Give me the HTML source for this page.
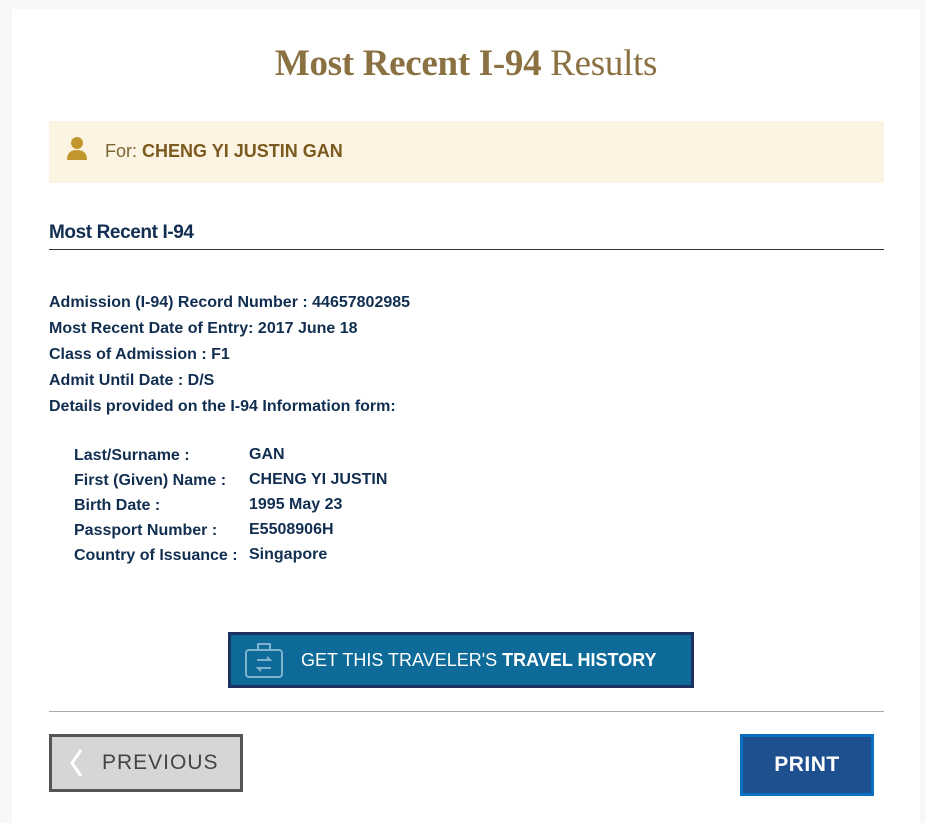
<!DOCTYPE html>
<html><head><style>
body{margin:0;width:925px;height:823px;background:#f7f7f7;position:relative;overflow:hidden;font-family:"Liberation Sans",Arial,sans-serif}
.panel{position:absolute;left:12px;top:9px;width:908px;height:814px;background:#fff}
.a{position:absolute;white-space:nowrap}
.t{font-family:"Liberation Serif",serif;color:#8b7142;font-size:37px;left:0;width:932px;text-align:center;top:42px;letter-spacing:-0.3px}
.for{left:49px;top:121px;width:835px;height:62px;background:#fdf3e3}
.nv{color:#112e51;font-weight:bold;font-size:16px}
.hr{position:absolute;left:49px;width:835px}
</style></head><body>
<div class="panel"></div>
<div class="a t"><b>Most Recent I-94</b> Results</div>
<div class="a for"></div>
<svg class="a" style="left:66px;top:137px" width="22" height="24" viewBox="0 0 22 24"><circle cx="11" cy="6" r="6" fill="#c1962c"/><path d="M1 23 Q1 13 11 13 Q21 13 21 23 Z" fill="#c1962c"/></svg>
<div class="a" style="left:105px;top:141px;font-size:18px;color:#7a6532">For: <b style="color:#7a5a1e">CHENG YI JUSTIN GAN</b></div>
<div class="a nv" style="left:49px;top:222px;font-size:19px;letter-spacing:-0.4px">Most Recent I-94</div>
<div class="hr" style="top:249px;height:1px;background:#333"></div>
<div class="a nv" style="left:49px;top:290px;line-height:26px">Admission (I-94) Record Number : 44657802985<br>Most Recent Date of Entry: 2017 June 18<br>Class of Admission : F1<br>Admit Until Date : D/S<br>Details provided on the I-94 Information form:</div>
<div class="a nv" style="left:74px;top:443px;line-height:25px">Last/Surname :<br>First (Given) Name :<br>Birth Date :<br>Passport Number :<br>Country of Issuance :</div>
<div class="a nv" style="left:249px;top:442px;line-height:25px">GAN<br>CHENG YI JUSTIN<br>1995 May 23<br>E5508906H<br>Singapore</div>
<div class="a" style="left:228px;top:632px;width:460px;height:50px;background:#0e6a99;border:3px solid #1c3361"></div>
<svg class="a" style="left:244px;top:641px" width="40" height="38" viewBox="0 0 40 38" fill="none" stroke="#7fb2cf" stroke-width="2"><rect x="2" y="9" width="36" height="27" rx="3"/><path d="M14 9V3h12v6M13 19h13l-3-3M27 27H14l3 3"/></svg>
<div class="a" style="left:301px;top:650px;font-size:18px;color:#fff">GET THIS TRAVELER'S <b>TRAVEL HISTORY</b></div>
<div class="hr" style="top:711px;height:1px;background:#aaa"></div>
<div class="a" style="left:49px;top:734px;width:188px;height:52px;background:#d6d6d6;border:3px solid #555"></div>
<svg class="a" style="left:68px;top:748px" width="16" height="30" viewBox="0 0 16 30"><path d="M13 2L4 15l9 13" fill="none" stroke="#fff" stroke-width="3"/></svg>
<div class="a" style="left:102px;top:751px;font-size:21px;color:#444;letter-spacing:1px">PREVIOUS</div>
<div class="a" style="left:740px;top:734px;width:128px;height:56px;background:#1e4f8f;border:3px solid #0a70c4"></div>
<div class="a" style="left:740px;top:753px;width:134px;text-align:center;font-size:21px;color:#fff;font-weight:bold;letter-spacing:0.5px">PRINT</div>
</body></html>
